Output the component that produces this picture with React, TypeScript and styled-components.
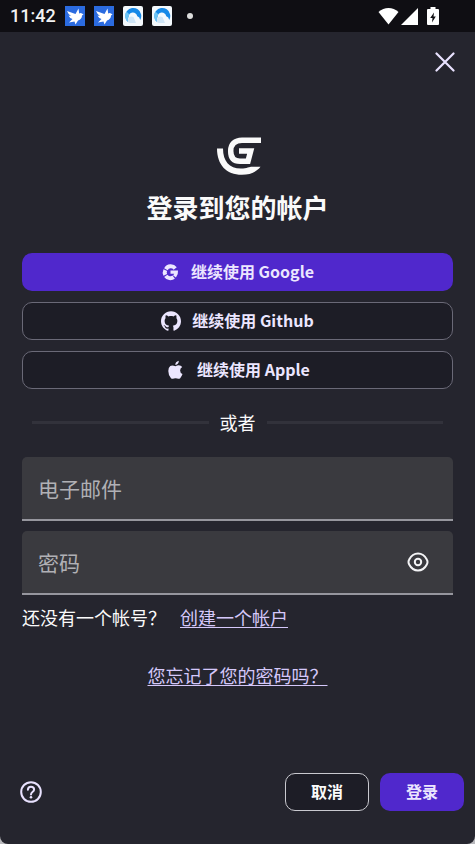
import React, { useState } from "react";
import styled, { createGlobalStyle } from "styled-components";

const GlobalStyle = createGlobalStyle`
  *, *::before, *::after { box-sizing: border-box; }
  body {
    margin: 0;
    background: #16151b;
    color: #fafafa;
    font-family: "Noto Sans CJK SC", "Noto Sans", sans-serif;
  }
  button, input { font-family: inherit; }
`;

const Screen = styled.div`
  min-height: 100vh;
  display: flex;
  flex-direction: column;
  background: #b9b9bd;
`;

const StatusBar = styled.header`
  height: 32px;
  flex: none;
  display: flex;
  align-items: center;
  justify-content: space-between;
  padding: 0 36px 0 10px;
  background: #0f0e13;
`;

const StatusGroup = styled.div<{ $gap: number }>`
  display: flex;
  align-items: center;
  gap: ${(p) => p.$gap}px;
`;

const Clock = styled.span`
  font: 500 18px/32px Roboto, sans-serif;
  color: #f2f2f2;
`;

const Dot = styled.span`
  width: 6px;
  height: 6px;
  margin-left: 6px;
  border-radius: 50%;
  background: #dcdcdc;
`;

const BatterySlot = styled.span`
  display: flex;
  margin-left: 7px;
`;

const Dialog = styled.main`
  flex: 1;
  display: flex;
  flex-direction: column;
  background: #25252e;
  border-radius: 0 0 8px 8px;
`;

const TopRow = styled.div`
  display: flex;
  justify-content: flex-end;
  padding: 16px 16px 0;
`;

const IconButton = styled.button<{ $size: number }>`
  width: ${(p) => p.$size}px;
  height: ${(p) => p.$size}px;
  display: flex;
  align-items: center;
  justify-content: center;
  padding: 0;
  border: 0;
  background: none;
  color: #e9e2ff;
  cursor: pointer;
`;

const Form = styled.form`
  flex: 1;
  display: flex;
  flex-direction: column;
`;

const Content = styled.div`
  flex: 1;
  display: flex;
  flex-direction: column;
  padding: 61px 22px 0;
`;

const Brand = styled.div`
  display: flex;
  flex-direction: column;
  align-items: center;
  gap: 12px;
`;

const Title = styled.h1`
  margin: 0;
  font-size: 26px;
  line-height: 40px;
  font-weight: 700;
`;

const Providers = styled.div`
  display: flex;
  flex-direction: column;
  gap: 11px;
  margin-top: 26px;
`;

const Button = styled.button<{ $kind: "primary" | "outline" | "light" }>`
  height: 38px;
  min-width: 84px;
  display: flex;
  align-items: center;
  justify-content: center;
  gap: 11px;
  padding: 0 24px;
  border-radius: 10px;
  border: ${(p) =>
    p.$kind === "primary" ? "0" : p.$kind === "light" ? "1px solid #c9c9cf" : "1px solid #6a6977"};
  background: ${(p) => (p.$kind === "primary" ? "#5028cc" : "#1d1d26")};
  color: ${(p) => (p.$kind === "light" ? "#fafafa" : "#ece6ff")};
  font-size: 16px;
  line-height: 24px;
  font-weight: 700;
  cursor: pointer;
`;

const Label = styled.span`
  padding-bottom: 3px;
`;

const Divider = styled.div`
  display: flex;
  align-items: center;
  gap: 11px;
  margin: 19px 10px 21px;
  font-size: 18px;
  line-height: 28px;

  &::before, &::after {
    content: "";
    flex: 1;
    height: 3px;
    background: #32323b;
  }
`;

const Fields = styled.div`
  display: flex;
  flex-direction: column;
  gap: 10px;
`;

const Field = styled.div`
  height: 64px;
  display: flex;
  align-items: center;
  padding: 0 21px 0 16px;
  border-radius: 5px 5px 0 0;
  border-bottom: 2px solid #96969e;
  background: #3a3a3f;
  color: #fafafa;
`;

const Input = styled.input`
  flex: 1;
  min-width: 0;
  height: 100%;
  padding: 0;
  border: 0;
  outline: 0;
  background: none;
  color: #fafafa;
  font-size: 21px;

  &::placeholder { color: #b0b0b5; opacity: 1; }
`;

const SignupLine = styled.p`
  display: flex;
  gap: 14px;
  margin: 8px 0 0;
  font-size: 18px;
  line-height: 28px;
`;

const Link = styled.a`
  color: #d5c8fa;
  text-decoration: underline;
  text-underline-offset: 2px;
`;

const ForgotLine = styled.p`
  margin: 30px 0 0;
  text-align: center;
  font-size: 18px;
  line-height: 28px;
`;

const Footer = styled.footer`
  display: flex;
  align-items: center;
  justify-content: space-between;
  padding: 11px 11px 33px 15px;
`;

const Actions = styled.div`
  display: flex;
  gap: 11px;
`;

const BirdIcon = () => (
  <svg width="20" height="20" viewBox="0 0 20 20" aria-hidden="true">
    <rect width="20" height="20" fill="#2b6be0" />
    <path fill="#fff" d="M2 5 10.500 8 13.500 2.500 14.200 7.500Q15.800 6.300 17 7.600L18.500 8.600 17 9.500Q17 13 13 14.500L10.500 18.500 9.500 15.500 4 16.500 7.500 13Q4.500 12 3.500 9.500L6 10Q3 8 2 5Z" />
  </svg>
);

const CloudIcon = () => (
  <svg width="20" height="20" viewBox="0 0 20 20" aria-hidden="true">
    <rect width="20" height="20" rx="2" fill="#f4f9fd" />
    <path fill="#1689e8" d="M5 16A8 8 0 1 1 17.200 14Q16.800 11 14.300 10.200 13 6.300 9.500 6.500 5.500 7 5.500 11 4 13 5 16Z" />
    <path fill="#6cc4f6" d="M5 16Q2 13.500 2 9.500 2.300 7 3.500 5.500L6.500 8.500Q5.500 9.500 5.500 11 4 13 5 16Z" />
    <path fill="#cfe6f8" d="M5 16Q4 13 6 11.200 8 9.800 10.500 11L13 17H7Q5.700 17 5 16Z" />
  </svg>
);

const WifiIcon = () => (
  <svg width="21" height="18" viewBox="0 0 21 18" aria-hidden="true">
    <path fill="#fff" d="M.5 5Q5 1 10.500 1T20.500 5L10.500 17.500Z" />
  </svg>
);

const SignalIcon = () => (
  <svg width="17" height="18" viewBox="0 0 17 18" aria-hidden="true">
    <path fill="#fff" d="M17 1V18H0Z" />
  </svg>
);

const BatteryIcon = () => (
  <svg width="12" height="18" viewBox="0 0 12 18" aria-hidden="true">
    <path fill="#fff" d="M3.500 0h5v2H11q1 0 1 1v14q0 1-1 1H1q-1 0-1-1V3q0-1 1-1h2.500Z" />
    <path fill="#111015" d="M7 5.500 3.200 11H5.500L5 15.500 8.800 9.500H6.500Z" />
  </svg>
);

const CloseIcon = () => (
  <svg width="20" height="20" viewBox="0 0 20 20" aria-hidden="true">
    <path d="M1.500 1.500 18.500 18.500M18.500 1.500 1.500 18.500" stroke="currentColor" strokeWidth="2.200" strokeLinecap="round" />
  </svg>
);

const Logo = () => (
  <svg width="49" height="38" viewBox="-4 0 49 38" fill="none" aria-hidden="true">
    <path
      stroke="#fafafa"
      strokeWidth="5.500"
      d="M44 3.200H25C18 3.200 13.700 7.200 13.700 14 13.700 21 17 24.300 23 24.300H31L33.700 14H22"
    />
    <path
      fill="#fafafa"
      d="M0 11.500H6C6 24 12 31.500 24 31.500 30 31.500 32.500 29.800 35 29.800H43.500C39 35.500 32.500 37.800 25 37.800 9 37.800 0 27.500 0 11.500Z"
    />
  </svg>
);

const GoogleIcon = () => (
  <svg width="19" height="20" viewBox="0 0 19 20" fill="none" aria-hidden="true">
    <g stroke="#ece6ff" strokeWidth="4">
      <path d="M14.200 6.500A5.600 5.600 0 0 0 4.900 7.200" />
      <path d="M4.300 8A5.600 5.600 0 0 0 4.300 12.900" />
      <path d="M4.800 13.800A5.600 5.600 0 0 0 12.700 15.100" />
    </g>
    <path fill="#ece6ff" d="M9.500 8.600H17Q17.500 12.600 14.900 15.500L12 13.200Q13 12.500 13.200 11.700H9.500Z" />
  </svg>
);

const GithubIcon = () => (
  <svg width="20" height="20" viewBox="0 0 24 24" aria-hidden="true">
    <path
      fill="currentColor"
      d="M12 .297c-6.630 0-12 5.373-12 12 0 5.303 3.438 9.800 8.205 11.385.600.113.820-.258.820-.577 0-.285-.010-1.040-.015-2.040-3.338.724-4.042-1.610-4.042-1.610C4.422 18.070 3.633 17.700 3.633 17.700c-1.087-.744.084-.729.084-.729 1.205.084 1.838 1.236 1.838 1.236 1.070 1.835 2.809 1.305 3.495.998.108-.776.417-1.305.760-1.605-2.665-.300-5.466-1.332-5.466-5.930 0-1.310.465-2.380 1.235-3.220-.135-.303-.540-1.523.105-3.176 0 0 1.005-.322 3.300 1.230.960-.267 1.980-.399 3-.405 1.020.006 2.040.138 3 .405 2.280-1.552 3.285-1.230 3.285-1.230.645 1.653.240 2.873.120 3.176.765.840 1.230 1.910 1.230 3.220 0 4.610-2.805 5.625-5.475 5.920.420.360.810 1.096.810 2.220 0 1.606-.015 2.896-.015 3.286 0 .315.210.690.825.570C20.565 22.092 24 17.592 24 12.297c0-6.627-5.373-12-12-12"
    />
  </svg>
);

const AppleIcon = () => (
  <svg width="21" height="20" viewBox="0 0 21 20" aria-hidden="true">
    <g fill="currentColor">
      <path d="M10.500 6.300Q12 5.300 13.700 5.300 16 5.300 17.200 7 15.100 8.300 15.100 10.500 15.100 13 17.500 14 16.500 16.800 15.200 18.200 14 19.300 12.300 18.500 10.500 17.800 8.800 18.500 7.200 19.300 6 18.200 3.300 15.200 3.300 11 3.300 7.500 5.300 6 7.200 4.700 10.500 6.300Z" />
      <path d="M10.300 5Q10.200 1.800 13.800.7 14 4.200 10.300 5Z" />
    </g>
  </svg>
);

const EyeIcon = () => (
  <svg width="22" height="20" viewBox="0 0 22 20" fill="none" stroke="#f4f4f6" strokeWidth="2" aria-hidden="true">
    <path d="M11 1.500C15.500 1.500 18 4 19.800 7.500Q21.200 10 19.800 12.500C18 16 15.500 18.500 11 18.500S4 16 2.200 12.500Q.8 10 2.200 7.500C4 4 6.500 1.500 11 1.500Z" />
    <circle cx="11" cy="10" r="3.200" />
  </svg>
);

const HelpIcon = () => (
  <svg width="22" height="22" viewBox="0 0 22 22" fill="none" stroke="currentColor" strokeWidth="2" aria-hidden="true">
    <circle cx="11" cy="11" r="9.800" />
    <path d="M7.900 8.700Q8 5.800 11 5.800T14.100 8.500Q14.100 9.800 12.700 10.800 11 12 11 13.500" strokeLinecap="round" />
    <circle cx="11" cy="16.200" r="1.300" fill="currentColor" stroke="none" />
  </svg>
);

export default function App() {
  const [visible, setVisible] = useState(false);

  return (
    <>
      <GlobalStyle />
      <Screen>
        <StatusBar>
          <StatusGroup $gap={9}>
            <Clock>11:42</Clock>
            <BirdIcon />
            <BirdIcon />
            <CloudIcon />
            <CloudIcon />
            <Dot />
          </StatusGroup>
          <StatusGroup $gap={2}>
            <WifiIcon />
            <SignalIcon />
            <BatterySlot>
              <BatteryIcon />
            </BatterySlot>
          </StatusGroup>
        </StatusBar>
        <Dialog>
          <TopRow>
            <IconButton type="button" $size={28} aria-label="关闭">
              <CloseIcon />
            </IconButton>
          </TopRow>
          <Form onSubmit={(e) => e.preventDefault()}>
            <Content>
              <Brand>
                <Logo />
                <Title>登录到您的帐户</Title>
              </Brand>
              <Providers>
                <Button type="button" $kind="primary">
                  <GoogleIcon />
                  <Label>继续使用 Google</Label>
                </Button>
                <Button type="button" $kind="outline">
                  <GithubIcon />
                  <Label>继续使用 Github</Label>
                </Button>
                <Button type="button" $kind="outline">
                  <AppleIcon />
                  <Label>继续使用 Apple</Label>
                </Button>
              </Providers>
              <Divider>或者</Divider>
              <Fields>
                <Field>
                  <Input type="email" placeholder="电子邮件" aria-label="电子邮件" />
                </Field>
                <Field>
                  <Input type={visible ? "text" : "password"} placeholder="密码" aria-label="密码" />
                  <IconButton type="button" $size={28} aria-label="显示密码" onClick={() => setVisible(!visible)}>
                    <EyeIcon />
                  </IconButton>
                </Field>
              </Fields>
              <SignupLine>
                <span>还没有一个帐号？</span>
                <Link href="#signup">创建一个帐户</Link>
              </SignupLine>
              <ForgotLine>
                <Link href="#forgot">您忘记了您的密码吗？</Link>
              </ForgotLine>
            </Content>
            <Footer>
              <IconButton type="button" $size={32} aria-label="帮助">
                <HelpIcon />
              </IconButton>
              <Actions>
                <Button type="button" $kind="light">
                  <Label>取消</Label>
                </Button>
                <Button type="submit" $kind="primary">
                  <Label>登录</Label>
                </Button>
              </Actions>
            </Footer>
          </Form>
        </Dialog>
      </Screen>
    </>
  );
}
